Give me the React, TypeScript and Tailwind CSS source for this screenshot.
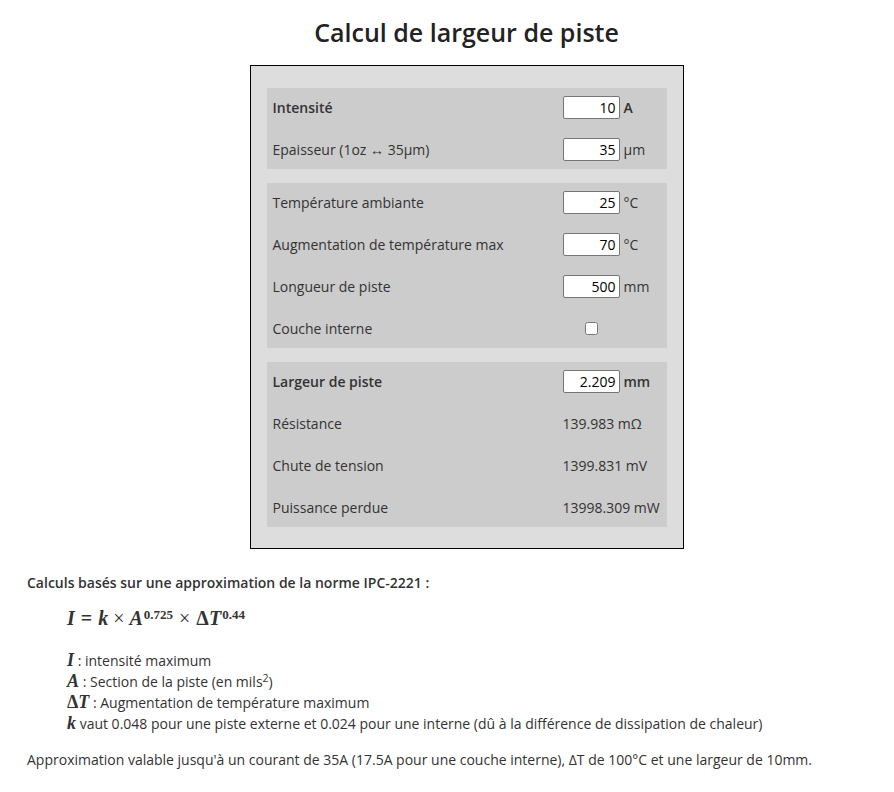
import React from "react";

type Row = {
  label: string;
  value?: string;
  unit?: string;
  text?: string;
  bold?: boolean;
  checkbox?: boolean;
};

const sections: Row[][] = [
  [
    { label: "Intensité", value: "10", unit: "A", bold: true },
    { label: "Epaisseur (1oz ↔ 35µm)", value: "35", unit: "µm" },
  ],
  [
    { label: "Température ambiante", value: "25", unit: "°C" },
    { label: "Augmentation de température max", value: "70", unit: "°C" },
    { label: "Longueur de piste", value: "500", unit: "mm" },
    { label: "Couche interne", checkbox: true },
  ],
  [
    { label: "Largeur de piste", value: "2.209", unit: "mm", bold: true },
    { label: "Résistance", text: "139.983 mΩ" },
    { label: "Chute de tension", text: "1399.831 mV" },
    { label: "Puissance perdue", text: "13998.309 mW" },
  ],
];

const mathFont = { fontFamily: '"Liberation Serif", "DejaVu Serif", serif' };

const M = ({ children }: { children: React.ReactNode }) => (
  <span className="font-bold italic text-[18px]" style={mathFont}>
    {children}
  </span>
);

const FieldRow = ({ row }: { row: Row }) => (
  <div className={`flex items-center h-[39px] ${row.bold ? "font-semibold" : ""}`}>
    <div className="w-[296px] pl-[6px]">{row.label}</div>
    {row.value !== undefined && (
      <>
        <input
          readOnly
          value={row.value}
          className="w-[57px] h-[23px] bg-white border border-[#767676] rounded-[2px] text-right pr-[3px] text-black outline-none font-normal"
          style={{ fontFamily: '"Open Sans", sans-serif', fontSize: 14 }}
        />
        <span className="ml-[4px]">{row.unit}</span>
      </>
    )}
    {row.checkbox && (
      <div className="w-[57px] flex justify-center">
        <input type="checkbox" className="w-[13px] h-[13px] m-0" />
      </div>
    )}
    {row.text && <span>{row.text}</span>}
  </div>
);

export default function App() {
  return (
    <div
      className="min-h-[792px] bg-white text-[14px] text-[#333]"
      style={{ fontFamily: '"Open Sans", sans-serif' }}
    >
      <div className="pl-[39px] flex flex-col items-center">
        <h1 className="text-[25px] font-semibold text-[#222] pt-[13px] pb-[14px] leading-[38px]">
          Calcul de largeur de piste
        </h1>
        <div className="w-[434px] border border-black bg-[#dddddd] px-[16px] pt-[22px] pb-[21px] flex flex-col gap-[14px]">
          {sections.map((rows, i) => (
            <div key={i} className="bg-[#cccccc] flex flex-col gap-[3px]">
              {rows.map((r) => (
                <FieldRow key={r.label} row={r} />
              ))}
            </div>
          ))}
        </div>
      </div>

      <div className="px-[27px] pt-[24px]">
        <p className="font-semibold leading-[20px]">
          Calculs basés sur une approximation de la norme IPC-2221 :
        </p>
        <div
          className="pl-[40px] pt-[11px] text-[20px] leading-[28px] font-bold italic flex items-baseline"
          style={mathFont}
        >
          <span>I</span>
          <span className="not-italic mx-[6px]">=</span>
          <span>k</span>
          <span className="not-italic font-normal mx-[5px]">×</span>
          <span>A</span>
          <sup className="text-[13px] not-italic ml-[1px]">0.725</sup>
          <span className="not-italic font-normal mx-[6px]">×</span>
          <span className="not-italic">Δ</span>
          <span>T</span>
          <sup className="text-[13px] not-italic ml-[1px]">0.44</sup>
        </div>
        <div className="pl-[40px] pt-[18px] leading-[20px]">
          <div>
            <M>I</M> : intensité maximum
          </div>
          <div>
            <M>A</M> : Section de la piste (en mils<sup>2</sup>)
          </div>
          <div>
            <M>
              <span className="not-italic">Δ</span>T
            </M>{" "}
            : Augmentation de température maximum
          </div>
          <div>
            <M>k</M> vaut 0.048 pour une piste externe et 0.024 pour une interne (dû à la différence
            de dissipation de chaleur)
          </div>
        </div>
        <p className="pt-[16px] leading-[20px]">
          Approximation valable jusqu'à un courant de 35A (17.5A pour une couche interne), ΔT de
          100°C et une largeur de 10mm.
        </p>
      </div>
    </div>
  );
}
